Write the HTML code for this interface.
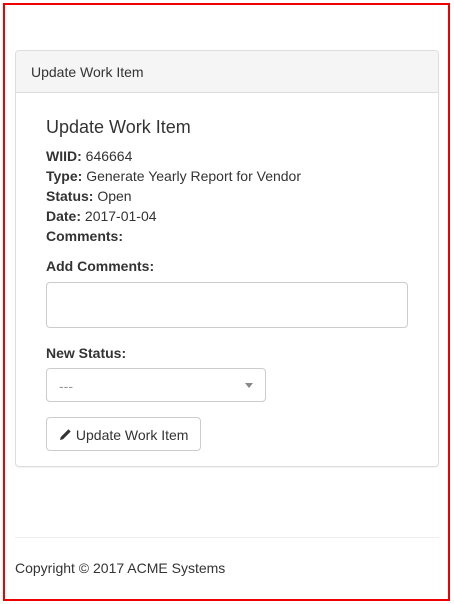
<!DOCTYPE html>
<html><head><style>
*{box-sizing:border-box;margin:0;padding:0}
body{width:454px;height:604px;background:#fff;font-family:"Liberation Sans",Arial,sans-serif;font-size:14px;color:#333;position:relative;overflow:hidden}
.frame{position:absolute;left:3px;top:3px;width:447px;height:598px;border:2px solid #e00}
.panel{position:absolute;left:15px;top:50px;width:424px;height:417px;border:1px solid #ddd;border-radius:4px;box-shadow:0 1px 1px rgba(0,0,0,.05)}
.ph{height:42px;background:#f5f5f5;border-bottom:1px solid #ddd;padding:12px 15px;line-height:18px;border-radius:3px 3px 0 0}
.a{position:absolute;left:46px;white-space:nowrap;line-height:20px}
b{font-weight:bold}
.ta{position:absolute;left:46px;top:282px;width:362px;height:46px;border:1px solid #ccc;border-radius:4px}
.sel{position:absolute;left:46px;top:368px;width:220px;height:34px;border:1px solid #ccc;border-radius:4px;color:#999;padding:7px 12px;line-height:20px}
.sel:after{content:"";position:absolute;right:12px;top:14px;border-left:4px solid transparent;border-right:4px solid transparent;border-top:5px solid #888}
.btn{position:absolute;left:46px;top:417px;width:155px;height:34px;border:1px solid #ccc;border-radius:4px;padding:7px 0 0 12px;line-height:20px}
.hr{position:absolute;left:15px;top:537px;width:424px;border-top:1px solid #eee}
</style></head><body>
<div class="frame"></div>
<div class="panel"><div class="ph">Update Work Item</div></div>
<div class="a" style="top:115px;font-size:18px;line-height:24px">Update Work Item</div>
<div class="a" style="top:146px"><b>WIID:</b> 646664</div>
<div class="a" style="top:166px"><b>Type:</b> Generate Yearly Report for Vendor</div>
<div class="a" style="top:186px"><b>Status:</b> Open</div>
<div class="a" style="top:206px"><b>Date:</b> 2017-01-04</div>
<div class="a" style="top:226px"><b>Comments:</b></div>
<div class="a" style="top:256px"><b>Add Comments:</b></div>
<div class="ta"></div>
<div class="a" style="top:343px"><b>New Status:</b></div>
<div class="sel">---</div>
<div class="btn"><svg width="13" height="13" viewBox="0 0 13 13" style="vertical-align:-1px"><path d="M1 12 L1.8 9 L9.5 1.3 L11.7 3.5 L4 11.2 Z" fill="#333"/></svg> Update Work Item</div>
<div class="hr"></div>
<div class="a" style="left:15px;top:558px">Copyright © 2017 ACME Systems</div>
</body></html>
